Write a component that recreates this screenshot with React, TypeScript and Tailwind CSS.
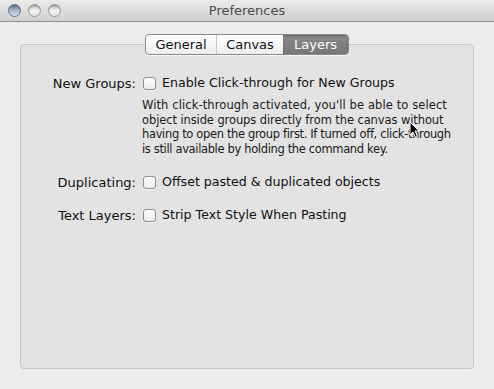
const font = { fontFamily: '"DejaVu Sans", "Lucida Grande", sans-serif' };

function Light() {
  return (
    <div className="h-[13px] w-[13px] rounded-full border border-[#9a9a9a] bg-gradient-to-b from-[#b8b8b8] via-[#f2f2f2] to-[#e4e4e4] shadow-[inset_0_1px_1px_rgba(0,0,0,0.25)]" />
  );
}

function Checkbox() {
  return (
    <div className="h-[13px] w-[13px] shrink-0 rounded-[3px] border border-[#8e8e8e] bg-gradient-to-b from-[#ffffff] to-[#ececec] shadow-[0_1px_0_rgba(255,255,255,0.6)]" />
  );
}

function Row({ label, text }: { label: string; text: string }) {
  return (
    <div className="flex items-center h-[17px]">
      <div className="w-[122px] text-right text-[13px] text-[#111] pr-[7px] whitespace-nowrap">{label}</div>
      <Checkbox />
      <div className="ml-[6px] text-[12.6px] text-[#111] whitespace-nowrap">{text}</div>
    </div>
  );
}

export default function App() {
  return (
    <div className="h-[389px] w-[494px] flex flex-col bg-[#ececec] overflow-hidden" style={font}>
      <div className="relative h-[22px] shrink-0 flex items-center justify-center bg-gradient-to-b from-[#ebebeb] to-[#cfcfcf] border-b border-[#8f8f8f]">
        <div className="absolute left-[8px] top-[4px] flex gap-[7px]">
          <div className="h-[13px] w-[13px] rounded-full border border-[#5d6b80] bg-gradient-to-b from-[#5c6f8c] via-[#a9b8cf] to-[#d5dfee]" />
          <Light />
          <Light />
        </div>
        <span className="text-[13px] text-[#4a4a4a]">Preferences</span>
      </div>

      <div className="flex-1 flex flex-col px-[20px] pt-[12px] pb-[20px]">
        <div className="relative z-10 flex justify-center">
          <div className="flex h-[21px] rounded-[4px] border border-[#8a8a8a] bg-gradient-to-b from-[#ffffff] to-[#eeeeee] text-[13px] shadow-[0_1px_0_rgba(255,255,255,0.7)] overflow-hidden">
            <div className="w-[71px] flex items-center justify-center text-[#111] border-r border-[#c8c8c8]">General</div>
            <div className="w-[66px] flex items-center justify-center text-[#111]">Canvas</div>
            <div className="w-[65px] flex items-center justify-center text-white bg-gradient-to-b from-[#8a8a8a] to-[#767676] shadow-[inset_0_1px_2px_rgba(0,0,0,0.3)]">Layers</div>
          </div>
        </div>
        <div className="relative -mt-[11px] flex-1 rounded-[4px] border border-[#c6c6c6] bg-[#e3e3e3] pt-[30px]">
          <Row label="New Groups:" text="Enable Click-through for New Groups" />
          <div className="ml-[121px] mt-[6px] text-[11.5px] leading-[14.5px] text-[#1a1a1a] whitespace-nowrap">
            <div className="tracking-[0.1px]">With click-through activated, you'll be able to select</div>
            <div className="tracking-[-0.1px]">object inside groups directly from the canvas without</div>
            <div className="tracking-[-0.35px]">having to open the group first. If turned off, click-through</div>
            <div className="tracking-[-0.35px]">is still available by holding the command key.</div>
          </div>
          <div className="mt-[18px]">
            <Row label="Duplicating:" text="Offset pasted & duplicated objects" />
          </div>
          <div className="mt-[16px]">
            <Row label="Text Layers:" text="Strip Text Style When Pasting" />
          </div>
          <svg className="absolute left-[388px] top-[76px]" width="12" height="18" viewBox="0 0 12 18">
            <path d="M1 1 L1 14 L4 11 L6.5 16.5 L8.5 15.5 L6 10 L10 10 Z" fill="#000" stroke="#fff" strokeWidth="1" />
          </svg>
        </div>
      </div>
    </div>
  );
}
